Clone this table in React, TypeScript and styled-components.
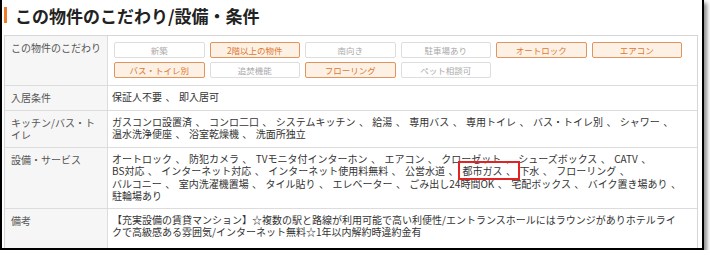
import React from "react";
import styled, { createGlobalStyle, css } from "styled-components";

const Global = createGlobalStyle`
  html, body { margin: 0; padding: 0; background: #fff; }
  body { font-family: "Noto Sans CJK JP", "Noto Sans", sans-serif; }
`;

const Frame = styled.div`
  box-sizing: border-box;
  width: 704px;
  height: 250px;
  border: 2px solid #000;
  border-top: none;
  box-shadow: 3px 3px 4px rgba(0, 0, 0, 0.45);
  overflow: hidden;
  padding: 0 2px;
  background: #fff;
`;

const Title = styled.h2`
  margin: 0 0 5px;
  height: 30px;
  display: flex;
  align-items: center;
  gap: 8px;
  font-size: 17px;
  font-weight: 700;
  color: #222;
  line-height: 1;
  &::before {
    content: "";
    display: block;
    width: 3px;
    height: 16px;
    background: #ec7a2a;
  }
`;

const Table = styled.div`
  box-sizing: border-box;
  width: 694px;
  display: grid;
  grid-template-columns: 103px 1fr;
  border: 1px solid #d6d6d6;
  border-bottom: none;
  font-size: 10px;
  line-height: 12.5px;
`;

const HeadCell = styled.div`
  box-sizing: border-box;
  background: #f6f6f6;
  color: #555;
  padding: 6px 2px 5px 6px;
  white-space: nowrap;
  border-right: 1px solid #dcdcdc;
  border-bottom: 1px solid #dcdcdc;
`;

const BodyCell = styled.div<{ $tags?: boolean; $last?: boolean }>`
  box-sizing: border-box;
  color: #333;
  padding: 5px 4px;
  word-spacing: 1.2px;
  border-bottom: 1px solid #dcdcdc;
  ${(p) =>
    p.$tags &&
    css`
      padding: 6px 6px 7px;
    `}
  ${(p) =>
    p.$last &&
    css`
      padding-bottom: 12px;
    `}
`;

const TagGrid = styled.div`
  display: grid;
  grid-template-columns: repeat(6, 90.5px);
  column-gap: 5px;
  row-gap: 4px;
`;

const Tag = styled.span<{ $on?: boolean }>`
  box-sizing: border-box;
  height: 16px;
  display: flex;
  align-items: center;
  justify-content: center;
  font-size: 8.5px;
  border-radius: 2px;
  border: 1px solid ${(p) => (p.$on ? "#e2945c" : "#dddddd")};
  background: ${(p) => (p.$on ? "#fcf1e4" : "#fff")};
  color: ${(p) => (p.$on ? "#df782f" : "#aaaaaa")};
`;

const Line = styled.div`
  white-space: nowrap;
`;

const Mark = styled.span`
  outline: 2px solid #e02424;
  outline-offset: 0px;
  padding: 0 2px;
  margin: 0 -2px 0 2px;
`;

const tags: [string, boolean][] = [
  ["新築", false],
  ["2階以上の物件", true],
  ["南向き", false],
  ["駐車場あり", false],
  ["オートロック", true],
  ["エアコン", true],
  ["バス・トイレ別", true],
  ["追焚機能", false],
  ["フローリング", true],
  ["ペット相談可", false],
];

const j = (items: string[], trailing = true) =>
  items.join(" 、 ") + (trailing ? " 、" : "");

export default function App() {
  return (
    <>
      <Global />
      <Frame>
        <Title>この物件のこだわり/設備・条件</Title>
        <Table>
          <HeadCell>この物件のこだわり</HeadCell>
          <BodyCell $tags>
            <TagGrid>
              {tags.map(([t, on]) => (
                <Tag key={t} $on={on}>
                  {t}
                </Tag>
              ))}
            </TagGrid>
          </BodyCell>

          <HeadCell>入居条件</HeadCell>
          <BodyCell>
            <Line>{j(["保証人不要", "即入居可"], false)}</Line>
          </BodyCell>

          <HeadCell>
            キッチン/バス・ト
            <br />
            イレ
          </HeadCell>
          <BodyCell>
            <Line>
              {j([
                "ガスコンロ設置済",
                "コンロ二口",
                "システムキッチン",
                "給湯",
                "専用バス",
                "専用トイレ",
                "バス・トイレ別",
                "シャワー",
              ])}
            </Line>
            <Line>{j(["温水洗浄便座", "浴室乾燥機", "洗面所独立"], false)}</Line>
          </BodyCell>

          <HeadCell>設備・サービス</HeadCell>
          <BodyCell>
            <Line>
              {j([
                "オートロック",
                "防犯カメラ",
                "TVモニタ付インターホン",
                "エアコン",
                "クローゼット",
                "シューズボックス",
                "CATV",
              ])}
            </Line>
            <Line>
              {j(["BS対応", "インターネット対応", "インターネット使用料無料", "公営水道"])}
              <Mark>都市ガス 、</Mark> {j(["下水", "フローリング"])}
            </Line>
            <Line>
              {j([
                "バルコニー",
                "室内洗濯機置場",
                "タイル貼り",
                "エレベーター",
                "ごみ出し24時間OK",
                "宅配ボックス",
                "バイク置き場あり",
              ])}
            </Line>
            <Line>駐輪場あり</Line>
          </BodyCell>

          <HeadCell>備考</HeadCell>
          <BodyCell $last>
            <Line>
              【充実設備の賃貸マンション】☆複数の駅と路線が利用可能で高い利便性/エントランスホールにはラウンジがありホテルライ
            </Line>
            <Line>クで高級感ある雰囲気/インターネット無料☆1年以内解約時違約金有</Line>
          </BodyCell>
        </Table>
      </Frame>
    </>
  );
}
